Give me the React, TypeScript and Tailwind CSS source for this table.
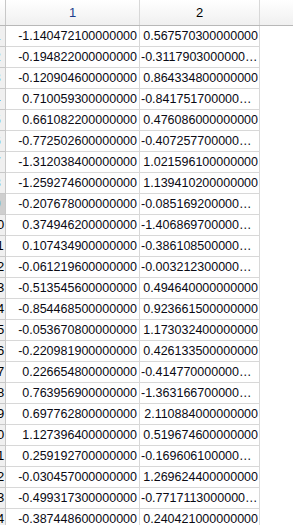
import React from 'react';

const rows: [string, string][] = [
  ['-1.140472100000000', '0.567570300000000'],
  ['-0.194822000000000', '-0.311790300000000'],
  ['-0.120904600000000', '0.864334800000000'],
  ['0.710059300000000', '-0.841751700000000'],
  ['0.661082200000000', '0.476086000000000'],
  ['-0.772502600000000', '-0.407257700000000'],
  ['-1.312038400000000', '1.021596100000000'],
  ['-1.259274600000000', '1.139410200000000'],
  ['-0.207678000000000', '-0.085169200000000'],
  ['0.374946200000000', '-1.406869700000000'],
  ['0.107434900000000', '-0.386108500000000'],
  ['-0.061219600000000', '-0.003212300000000'],
  ['-0.513545600000000', '0.494640000000000'],
  ['-0.854468500000000', '0.923661500000000'],
  ['-0.053670800000000', '1.173032400000000'],
  ['-0.220981900000000', '0.426133500000000'],
  ['0.226654800000000', '-0.414770000000000'],
  ['0.763956900000000', '-1.363166700000000'],
  ['0.697762800000000', '2.110884000000000'],
  ['1.127396400000000', '0.519674600000000'],
  ['0.259192700000000', '-0.169606100000000'],
  ['-0.030457000000000', '1.269624400000000'],
  ['-0.499317300000000', '-0.771711300000000'],
  ['-0.387448600000000', '0.240421000000000'],
];

export default function App() {
  return (
    <div
      className="w-[293px] h-[525px] overflow-hidden bg-white text-black"
      style={{ fontFamily: '"Liberation Sans", Arial, sans-serif' }}
    >
      {/* column header */}
      <div className="flex h-[26px] border-b border-[#b8b8b8] bg-gradient-to-b from-white to-[#f0f0f0] text-[13px]">
        <div className="w-[6px] shrink-0 border-r border-[#c8c8c8]" />
        <div className="w-[134px] shrink-0 border-r border-[#d8d8d8] flex items-center justify-center text-[#1c3c8c]">
          1
        </div>
        <div className="w-[120px] shrink-0 border-r border-[#d8d8d8] flex items-center justify-center">
          2
        </div>
        <div className="flex-1" />
      </div>

      {rows.map(([a, b], i) => (
        <div key={i} className="flex h-[21px] text-[12.5px] text-[#0a0a14]">
          {/* row header, mostly scrolled out of view */}
          <div
            className={`w-[6px] shrink-0 overflow-hidden flex justify-end border-r border-b border-[#c8c8c8] ${
              i === 8 ? 'bg-[#cfcfcf]' : 'bg-[#f0f0f0]'
            } ${i < 9 ? 'text-[#3a8ee6]' : 'text-black'}`}
          >
            <div className="w-[16px] shrink-0 flex items-center justify-center text-[13px]">{i + 1}</div>
          </div>
          <div className="w-[134px] shrink-0 border-r border-b border-[#d8d8d8] flex items-center justify-end px-[2px] overflow-hidden whitespace-nowrap">
            {a}
          </div>
          <div className="w-[120px] shrink-0 border-r border-b border-[#d8d8d8] flex items-center px-[1px] overflow-hidden">
            <span className="block w-full text-right whitespace-nowrap overflow-hidden text-ellipsis">{b}</span>
          </div>
          <div className="flex-1" />
        </div>
      ))}
    </div>
  );
}
